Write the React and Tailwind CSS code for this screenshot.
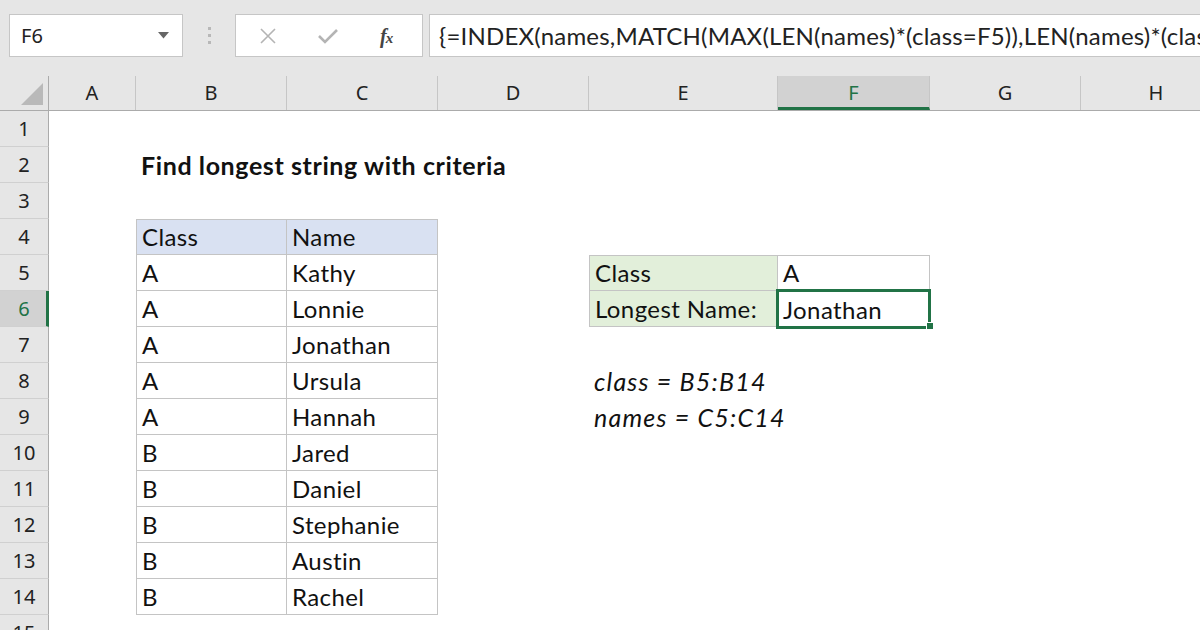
import React from "react";

const cols = [
  { l: "A", w: "w-[87px]" },
  { l: "B", w: "w-[151px]" },
  { l: "C", w: "w-[151px]" },
  { l: "D", w: "w-[151px]" },
  { l: "E", w: "w-[189px]" },
  { l: "F", w: "w-[152px]" },
  { l: "G", w: "w-[151px]" },
  { l: "H", w: "w-[151px]" },
];

const data = [
  ["A", "Kathy"],
  ["A", "Lonnie"],
  ["A", "Jonathan"],
  ["A", "Ursula"],
  ["A", "Hannah"],
  ["B", "Jared"],
  ["B", "Daniel"],
  ["B", "Stephanie"],
  ["B", "Austin"],
  ["B", "Rachel"],
];

const cellFont = "font-['Lato','Liberation_Sans',sans-serif]";
const bd = "border-[#c4c4c4]";

function Cell({ w, cls = "", children }) {
  return (
    <div
      className={`${w} shrink-0 h-full flex items-end pb-[5px] pl-[5px] text-[24px] tracking-[0.4px] leading-none text-[#111] whitespace-nowrap ${cls}`}
    >
      {children}
    </div>
  );
}

function RowHeader({ n, selected }) {
  return (
    <div
      className={`w-[49px] shrink-0 h-full flex items-center justify-center border-b border-[#d0d0d0] text-[20px] font-['Noto_Sans',sans-serif] ${
        selected
          ? "bg-[#d2d2d2] text-[#217346] border-r-[3px] border-r-[#217346] pl-[2px]"
          : "bg-[#e6e6e6] text-[#222] border-r border-r-[#ababab]"
      }`}
    >
      {n}
    </div>
  );
}

function Row({ n, selected, children }) {
  return (
    <div className="flex h-[36px]">
      <RowHeader n={n} selected={selected} />
      <div className="flex bg-white flex-1">{children}</div>
    </div>
  );
}

export default function App() {
  return (
    <div className={`w-[1200px] h-[630px] overflow-hidden bg-[#e6e6e6] ${cellFont}`}>
      {/* Toolbar */}
      <div className="h-[76px] flex items-start pt-[14px] pl-[9px] font-['Noto_Sans',sans-serif]">
        <div className="w-[174px] h-[43px] shrink-0 bg-white border border-[#c6c6c6] flex items-center justify-between pl-[11px] pr-[13px]">
          <span className="text-[20px] text-[#222]">F6</span>
          <svg width="11" height="7" viewBox="0 0 11 7">
            <path d="M0 0 H11 L5.5 6.5 Z" fill="#666" />
          </svg>
        </div>
        <div className="w-[52px] shrink-0 h-[43px] flex flex-col items-center justify-center gap-[4px]">
          <div className="w-[3px] h-[3px] bg-[#b8b8b8]" />
          <div className="w-[3px] h-[3px] bg-[#b8b8b8]" />
          <div className="w-[3px] h-[3px] bg-[#b8b8b8]" />
        </div>
        <div className="w-[188px] shrink-0 h-[43px] bg-white border border-[#c6c6c6] flex items-center">
          <svg width="18" height="18" viewBox="0 0 18 18" className="ml-[23px]">
            <path d="M2 2 L16 16 M16 2 L2 16" stroke="#b4b4b4" strokeWidth="1.6" fill="none" />
          </svg>
          <svg width="22" height="18" viewBox="0 0 22 18" className="ml-[40px]">
            <path d="M2 9 L8 15 L20 3" stroke="#b4b4b4" strokeWidth="2.6" fill="none" strokeLinejoin="miter" />
          </svg>
          <span className="ml-[41px] font-['Liberation_Serif',serif] italic text-[#444] text-[20px] leading-none font-bold tracking-[-1px]">
            f<span className="text-[15px]">x</span>
          </span>
        </div>
        <div className="w-[800px] shrink-0 ml-[6px] h-[43px] bg-white border border-[#c6c6c6] flex items-center pl-[9px]">
          <span className="text-[24px] text-[#222] whitespace-nowrap font-['Lato',sans-serif] tracking-[0.2px]">
            {"{=INDEX(names,MATCH(MAX(LEN(names)*(class=F5)),LEN(names)*(class=F5),0))}"}
          </span>
        </div>
      </div>

      {/* Column headers */}
      <div className="flex h-[35px] border-b border-[#ababab] font-['Noto_Sans',sans-serif]">
        <div className="w-[49px] shrink-0 h-full border-r border-[#ababab] flex items-end justify-end pr-[5px] pb-[5px]">
          <svg width="22" height="22" viewBox="0 0 22 22">
            <path d="M22 0 L22 22 L0 22 Z" fill="#b9b9b9" />
          </svg>
        </div>
        {cols.map((c) => (
          <div
            key={c.l}
            className={`${c.w} shrink-0 h-full flex items-center justify-center text-[20px] border-r border-[#c6c6c6] ${
              c.l === "F"
                ? "bg-[#d2d2d2] text-[#217346] border-b-[3px] border-b-[#217346] pt-[3px]"
                : "text-[#222]"
            }`}
          >
            {c.l}
          </div>
        ))}
      </div>

      {/* Rows */}
      <Row n={1} />
      <Row n={2}>
        <Cell w="w-[87px]" />
        <Cell w="w-[151px]" cls="font-bold pl-[4px] text-[25px] tracking-[0.6px]">
          Find longest string with criteria
        </Cell>
      </Row>
      <Row n={3} />
      <Row n={4}>
        <Cell w="w-[87px]" />
        <Cell w="w-[151px]" cls={`bg-[#d9e1f2] border ${bd}`}>Class</Cell>
        <Cell w="w-[151px]" cls={`bg-[#d9e1f2] border-t border-r border-b ${bd}`}>Name</Cell>
      </Row>
      {data.map(([cl, nm], i) => {
        const n = i + 5;
        return (
          <Row key={n} n={n} selected={n === 6}>
            <Cell w="w-[87px]" />
            <Cell w="w-[151px]" cls={`border-l border-r border-b ${bd}`}>{cl}</Cell>
            <Cell w="w-[151px]" cls={`border-r border-b ${bd}`}>{nm}</Cell>
            <Cell w="w-[151px]" />
            {n === 5 && (
              <>
                <Cell w="w-[189px]" cls={`bg-[#e2efda] border ${bd}`}>Class</Cell>
                <Cell w="w-[152px]" cls={`border-t border-r border-b ${bd}`}>A</Cell>
              </>
            )}
            {n === 6 && (
              <>
                <Cell w="w-[189px]" cls={`bg-[#e2efda] border-l border-r border-b ${bd}`}>Longest Name:</Cell>
                <Cell w="w-[152px]" cls="relative">
                  Jonathan
                  <div className="absolute left-[-2px] top-[-2px] w-[155px] h-[40px] border-[3px] border-[#217346]" />
                  <div className="absolute left-[148px] top-[31px] w-[8px] h-[8px] bg-[#217346] border border-white" />
                </Cell>
              </>
            )}
            {n === 8 && (
              <Cell w="w-[189px]" cls="italic text-[25px] tracking-[1.2px]">class = B5:B14</Cell>
            )}
            {n === 9 && (
              <Cell w="w-[189px]" cls="italic text-[25px] tracking-[1.2px]">names = C5:C14</Cell>
            )}
          </Row>
        );
      })}
      <Row n={15} />
    </div>
  );
}
